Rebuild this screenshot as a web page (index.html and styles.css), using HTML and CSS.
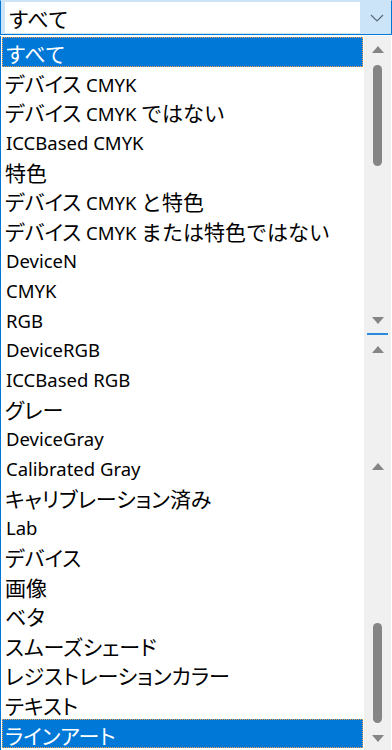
FILE: index.html
```html
<!DOCTYPE html>
<html lang="ja">
<head>
<meta charset="utf-8">
<title>カラー種別</title>
<link rel="stylesheet" href="styles.css">
</head>
<body>
<div class="combo">
  <div class="field">すべて</div>
  <div class="combo-arrow">
    <svg width="14" height="8" viewBox="0 0 14 8"><path d="M1 1 L7 7 L13 1" fill="none" stroke="#5a6a7a" stroke-width="1.2"/></svg>
  </div>
</div>
<div class="dropdown">
  <ul class="list">
    <li class="item selected">すべて</li>
    <li class="item"><span class="kt">デバイス</span> <span class="en">CMYK</span></li>
    <li class="item"><span class="kt">デバイス</span> <span class="en">CMYK</span> ではない</li>
    <li class="item en">ICCBased CMYK</li>
    <li class="item">特色</li>
    <li class="item"><span class="kt">デバイス</span> <span class="en">CMYK</span> と特色</li>
    <li class="item"><span class="kt">デバイス</span> <span class="en">CMYK</span> または特色ではない</li>
    <li class="item en">DeviceN</li>
    <li class="item en">CMYK</li>
    <li class="item en">RGB</li>
    <li class="item en">DeviceRGB</li>
    <li class="item en">ICCBased RGB</li>
    <li class="item kt">グレー</li>
    <li class="item en">DeviceGray</li>
    <li class="item en">Calibrated Gray</li>
    <li class="item"><span class="kt">キャリブレーション</span>済み</li>
    <li class="item en">Lab</li>
    <li class="item kt">デバイス</li>
    <li class="item">画像</li>
    <li class="item kt">ベタ</li>
    <li class="item kt">スムーズシェード</li>
    <li class="item kt">レジストレーションカラー</li>
    <li class="item kt">テキスト</li>
    <li class="item kt selected">ラインアート</li>
  </ul>
  <div class="scrollbar">
    <div class="seg seg-a">
      <div class="arrow up"></div>
      <div class="thumb thumb-a"></div>
      <div class="spacer"></div>
      <div class="arrow down"></div>
      <div class="mark"></div>
    </div>
    <div class="seg seg-b">
      <div class="arrow up"></div>
      <div class="gap-b1"></div>
      <div class="arrow up"></div>
      <div class="spacer"></div>
      <div class="thumb thumb-b"></div>
      <div class="arrow down"></div>
    </div>
  </div>
</div>
</body>
</html>
```
FILE: styles.css
```css
html, body {
  margin: 0;
  padding: 0;
}
body {
  width: 392px;
  height: 750px;
  overflow: hidden;
  background: #ffffff;
  font-family: "Noto Sans CJK JP", "Noto Sans", sans-serif;
  color: #000000;
}
.combo {
  height: 35px;
  box-sizing: border-box;
  display: flex;
  background: #cce4f7;
  border: 1px solid #0078d7;
  border-top-color: #cce4f7;
}
.field {
  width: 355px;
  margin: 1px 0 1px 4px;
  background: #ffffff;
  font-size: 21px;
  line-height: 31px;
  padding: 1px 0 0 3px;
  box-sizing: border-box;
}
.combo-arrow {
  flex: 1;
  display: flex;
  align-items: center;
  justify-content: center;
  padding-left: 2px;
}
.dropdown {
  display: flex;
  height: 715px;
  margin-top: 1px;
}
.list {
  list-style: none;
  margin: 0;
  padding: 1px 0 0 1px;
  width: 363px;
  border-left: 1px solid #0078d7;
  box-sizing: border-box;
}
.item {
  height: 29.65px;
  line-height: 29.65px;
  font-size: 21px;
  padding: 2px 0 0 3px;
  white-space: nowrap;
  box-sizing: border-box;
}
.en {
  font-family: "Noto Sans", sans-serif;
  font-size: 18.5px;
}
.item.en {
  padding-left: 4px;
}
.kt {
  font-feature-settings: "palt";
}
.item.selected {
  background: #0078d7;
  color: #ffffff;
  outline: 1px dotted #f0a050;
  outline-offset: -1px;
}
.scrollbar {
  width: 27px;
  margin-left: 1px;
  background: #f0f0f0;
  display: flex;
  flex-direction: column;
}
.seg {
  display: flex;
  flex-direction: column;
  align-items: center;
}
.seg-a {
  height: 299px;
}
.seg-b {
  flex: 1;
}
.arrow {
  height: 26px;
  width: 100%;
  display: flex;
  align-items: center;
  justify-content: center;
}
.arrow::before {
  content: "";
  width: 0;
  height: 0;
  border-left: 6px solid transparent;
  border-right: 6px solid transparent;
}
.arrow.up::before {
  border-bottom: 7px solid #858585;
}
.arrow.down::before {
  border-top: 7px solid #858585;
}
.thumb {
  width: 9px;
  border-radius: 5px;
  background: #858585;
}
.thumb-a {
  height: 101px;
  margin-top: 3px;
}
.thumb-b {
  height: 100px;
  margin-bottom: 2px;
}
.spacer {
  flex: 1;
}
.mark {
  width: 21px;
  height: 2px;
  background: #2a8ae0;
}
.seg-b > .arrow:first-child {
  margin-top: 1px;
}
.gap-b1 {
  height: 91px;
}
```
